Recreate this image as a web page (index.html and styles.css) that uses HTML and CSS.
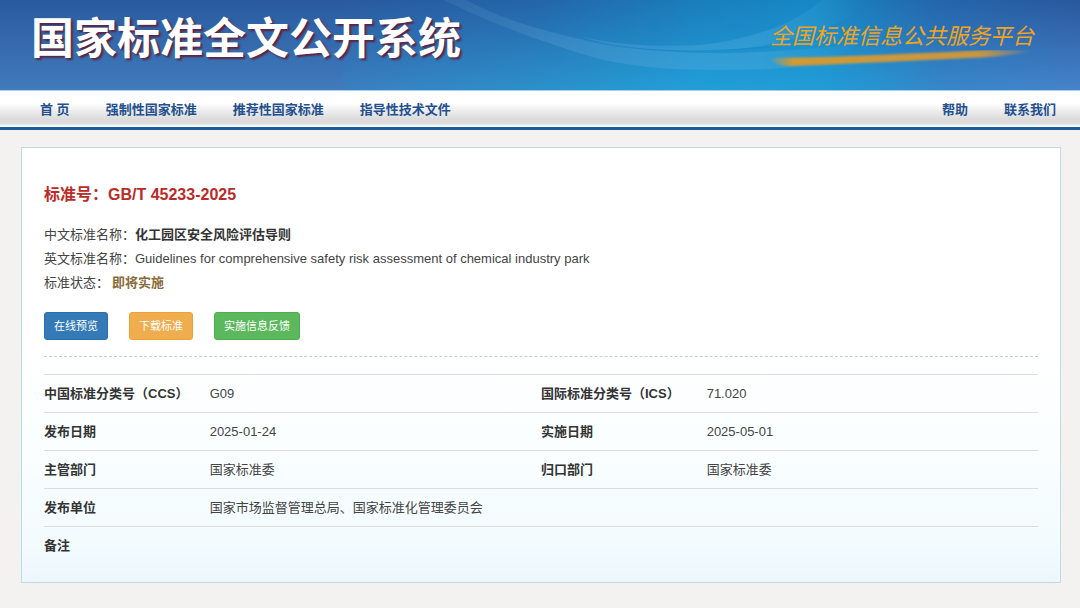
FILE: index.html
```html
<!DOCTYPE html>
<html lang="zh-CN">
<head>
<meta charset="utf-8">
<meta name="viewport" content="width=device-width, initial-scale=1">
<title>国家标准全文公开系统</title>
<link rel="stylesheet" href="styles.css">
</head>
<body>
<header class="banner">
  <svg class="banner-art" viewBox="0 0 1080 90" preserveAspectRatio="none" aria-hidden="true">
    <defs>
      <linearGradient id="left" x1="0" y1="0" x2="0" y2="1">
        <stop offset="0" stop-color="#2a5a9f"/><stop offset="1" stop-color="#407bbc"/>
      </linearGradient>
      <linearGradient id="top" x1="0" y1="0" x2="1" y2="0">
        <stop offset="0" stop-color="#2a5a9f"/><stop offset="0.25" stop-color="#2464a8"/>
        <stop offset="0.48" stop-color="#1b7dbc"/><stop offset="0.64" stop-color="#1689c5"/>
        <stop offset="0.8" stop-color="#2566ac"/><stop offset="1" stop-color="#2a589d"/>
      </linearGradient>
      <linearGradient id="bottom" x1="0" y1="0" x2="1" y2="0">
        <stop offset="0" stop-color="#3b80c1"/><stop offset="0.25" stop-color="#2d90ca"/>
        <stop offset="0.48" stop-color="#229fd8"/><stop offset="0.66" stop-color="#229bd6"/>
        <stop offset="0.82" stop-color="#3787c9"/><stop offset="1" stop-color="#4684cb"/>
      </linearGradient>
      <linearGradient id="fade" x1="0" y1="0" x2="0" y2="1">
        <stop offset="0" stop-color="#000"/><stop offset="1" stop-color="#fff"/>
      </linearGradient>
      <mask id="down"><rect x="343" width="737" height="90" fill="url(#fade)"/></mask>
      <linearGradient id="band" gradientUnits="userSpaceOnUse" x1="450" y1="0" x2="860" y2="0">
        <stop offset="0" stop-color="#7fb4e0" stop-opacity="0.12"/><stop offset="0.3" stop-color="#7fb9e6" stop-opacity="0.2"/>
        <stop offset="0.75" stop-color="#6fbdea" stop-opacity="0.24"/><stop offset="1" stop-color="#6fbdea" stop-opacity="0"/>
      </linearGradient>
    </defs>
    <rect width="344" height="90" fill="url(#left)"/>
    <rect x="343" width="737" height="90" fill="url(#top)"/>
    <rect x="343" width="737" height="90" fill="url(#bottom)" mask="url(#down)"/>
    <path d="M444 0C500 28 560 48 600 59C650 71 710 71 770 69C810 67 840 58 860 44C800 50 750 54 700 53C650 52 610 45 575 38C535 29 500 18 466 0Z" fill="url(#band)"/>
    <path d="M582 37C625 46 660 47 700 45C750 40 795 24 822 0H875C835 32 770 51 700 51C650 51 610 46 582 37Z" fill="url(#band)"/>
    <path d="M584 40C630 51 690 54 770 47" fill="none" stroke="#1585c4" stroke-width="1" opacity="0.6"/>
  </svg>
  <h1 class="site-title">国家标准全文公开系统</h1>
  <a class="platform" href="#">
    <span>全国标准信息公共服务平台</span>
    <svg class="brush" viewBox="0 0 264 18" preserveAspectRatio="none" aria-hidden="true">
      <defs>
        <linearGradient id="ink" x1="0" y1="0" x2="1" y2="0">
          <stop offset="0" stop-color="#d09a35" stop-opacity="0.2"/><stop offset="0.08" stop-color="#d09a35"/>
          <stop offset="0.8" stop-color="#c89742"/><stop offset="1" stop-color="#b89a5a" stop-opacity="0.1"/>
        </linearGradient>
        <filter id="soft"><feGaussianBlur stdDeviation="0.8"/></filter>
      </defs>
      <path d="M2 8C80 7 150 3 220 0Q246 0 262 1Q246 5 220 7C150 10 80 14 20 16Q8 16 2 11Z" fill="url(#ink)" filter="url(#soft)"/>
    </svg>
  </a>
</header>
<nav class="menu">
  <a href="#">首 页</a>
  <a href="#">强制性国家标准</a>
  <a href="#">推荐性国家标准</a>
  <a href="#">指导性技术文件</a>
  <a class="menu-end" href="#">帮助</a>
  <a href="#">联系我们</a>
</nav>
<main class="card">
  <h2 class="number">标准号：GB/T 45233-2025</h2>
  <div class="summary">
    <p>中文标准名称：<b>化工园区安全风险评估导则</b></p>
    <p>英文标准名称：Guidelines for comprehensive safety risk assessment of chemical industry park</p>
    <p class="status-line">标准状态：<b class="status">即将实施</b></p>
  </div>
  <div class="actions">
    <button class="btn preview" type="button">在线预览</button>
    <button class="btn download" type="button">下载标准</button>
    <button class="btn feedback" type="button">实施信息反馈</button>
  </div>
  <table class="details">
    <tbody>
      <tr><th scope="row">中国标准分类号（CCS）</th><td>G09</td><th scope="row">国际标准分类号（ICS）</th><td>71.020</td></tr>
      <tr><th scope="row">发布日期</th><td>2025-01-24</td><th scope="row">实施日期</th><td>2025-05-01</td></tr>
      <tr><th scope="row">主管部门</th><td>国家标准委</td><th scope="row">归口部门</th><td>国家标准委</td></tr>
      <tr><th scope="row">发布单位</th><td colspan="3">国家市场监督管理总局、国家标准化管理委员会</td></tr>
      <tr><th scope="row">备注</th><td colspan="3"></td></tr>
    </tbody>
  </table>
</main>
</body>
</html>
```
FILE: styles.css
```css
* {
  box-sizing: border-box;
}

body {
  margin: 0;
  background: #f3f2f1;
  color: #444;
  font: 13px/24px "Liberation Sans", "Noto Sans CJK SC", sans-serif;
}

h1, h2, p {
  margin: 0;
}

a {
  color: inherit;
  text-decoration: none;
}

.banner {
  position: relative;
  display: flex;
  justify-content: space-between;
  align-items: flex-start;
  min-height: 90px;
  padding: 9px 46px 0 31px;
}

.banner-art {
  position: absolute;
  inset: 0;
  width: 100%;
  height: 100%;
}

.site-title {
  position: relative;
  color: #fff;
  font-size: 43px;
  line-height: 60px;
  text-shadow: 2px 2px 2px #5c2342;
}

.platform {
  position: relative;
  display: flex;
  flex-direction: column;
  padding-top: 15px;
  color: #f0a41e;
  font-size: 22px;
  font-style: italic;
  line-height: 26px;
}

.brush {
  width: 100%;
  height: 18px;
}

.menu {
  display: flex;
  align-items: center;
  gap: 36px;
  min-height: 40px;
  padding: 2px 24px 0 40px;
  border-top: 1px solid #a9cdea;
  border-bottom: 3px solid #1c5c96;
  background: linear-gradient(#fff 35%, #ededed 55%, #dadada 80%, #dedede 92%, #fff 97%);
  color: #24508f;
  font-weight: bold;
}

.menu-end {
  margin-left: auto;
}

.card {
  margin: 17px 19px 26px 21px;
  padding: 35px 22px 17px;
  border: 1px solid #bcdde6;
  background: linear-gradient(#fff 45%, #fafeff 70%, #f2fbfe 92%, #edf6fd);
}

.number {
  color: #b92c28;
  font-size: 16px;
  line-height: 24px;
}

.summary {
  padding: 16px 0 17px;
}

.summary b {
  color: #333;
}

.status-line {
  display: flex;
  gap: 3px;
}

.summary .status {
  color: #8a6d3b;
}

.actions {
  display: flex;
  gap: 21px;
  padding-bottom: 16px;
  border-bottom: 1px dashed #ccc;
}

.btn {
  padding: 0 9px;
  border: 1px solid;
  border-radius: 3px;
  color: #fff;
  font: 11px/26px "Liberation Sans", "Noto Sans CJK SC", sans-serif;
}

.preview {
  border-color: #2e6da4;
  background: #337ab7;
}

.download {
  border-color: #eea236;
  background: #f0ad4e;
}

.feedback {
  border-color: #4cae4c;
  background: #5cb85c;
}

.details {
  width: 100%;
  margin-top: 17px;
  border-collapse: collapse;
  table-layout: fixed;
  line-height: 20px;
}

.details th,
.details td {
  height: 38px;
  padding: 0;
  border-top: 1px solid #ddd;
  text-align: left;
}

.details th {
  width: 16.6667%;
  color: #333;
}
```
